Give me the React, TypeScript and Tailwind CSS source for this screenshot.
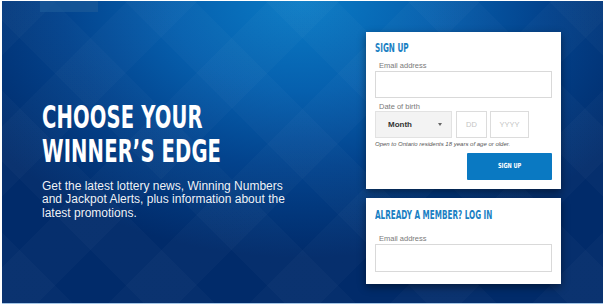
const COND = "font-['Liberation_Sans_Narrow','DejaVu_Sans_Condensed','Liberation_Sans',sans-serif]"

function Label({ text }: { text: string }) {
  return <div className="pl-[4px] text-[7.5px] leading-[9px] text-[#7a7a7a]">{text}</div>
}

function TextBox({ h = 'h-[27px]' }: { h?: string }) {
  return <div className={`${h} w-full border border-[#d9d9d9] bg-white`} />
}

export default function App() {
  return (
    <div className="h-[307px] w-[606px] bg-white pl-[2px] pr-[3px] pt-[1px] font-['Liberation_Sans',Arial,sans-serif]">
      <div className="flex h-[302px] w-full bg-[repeating-linear-gradient(45deg,rgba(255,255,255,0.02)_0_50px,rgba(0,0,0,0)_50px_100px),repeating-linear-gradient(-45deg,rgba(255,255,255,0.02)_0_50px,rgba(0,0,0,0)_50px_100px),radial-gradient(ellipse_62%_85%_at_50%_0%,#0a7bc5_0%,#0660ae_35%,#03438d_65%,#012b6a_100%)]">
        {/* left: headline */}
        <div className="flex flex-1 flex-col pl-[40px]">
          <div className="-ml-[2px] h-[11px] w-[58px] bg-[#1b5a98]/70" />
          <h1
            className={`mt-[88px] origin-left scale-x-[0.69] text-[31.5px] font-bold leading-[34px] tracking-[0.2px] text-white ${COND}`}
          >
            CHOOSE YOUR
            <br />
            WINNER’S EDGE
          </h1>
          <p className="mt-[12px] text-[12px] leading-[13.3px] text-white/95">
            Get the latest lottery news, Winning Numbers
            <br />
            and Jackpot Alerts, plus information about the
            <br />
            latest promotions.
          </p>
        </div>

        {/* right: forms */}
        <div className="mr-[42px] mt-[31px] flex w-[195px] flex-col gap-[9px]">
          <div className="bg-white px-[9px] pb-[9px] pt-[9px] shadow-[0_3px_8px_rgba(0,0,0,0.45)]">
            <div className={`origin-left scale-x-[0.65] text-[12.4px] font-bold leading-[14px] text-[#1a7fc3] ${COND}`}>
              SIGN UP
            </div>
            <div className="mt-[6px]">
              <Label text="Email address" />
            </div>
            <div className="mt-[1px]">
              <TextBox />
            </div>
            <div className="mt-[4px]">
              <Label text="Date of birth" />
            </div>
            <div className="flex h-[27px]">
              <div className="flex w-[77px] items-center justify-between border border-[#e2e2e2] bg-[#f3f3f3] pl-[12px] pr-[9px]">
                <span className="text-[8px] font-bold text-[#333]">Month</span>
                <span className="h-0 w-0 border-x-[2.5px] border-t-[3px] border-x-transparent border-t-[#666]" />
              </div>
              <div className="ml-[4px] flex w-[31px] items-center justify-center border border-[#dcdcdc] text-[7.5px] text-[#c4c4c4]">
                DD
              </div>
              <div className="ml-[3px] flex w-[39px] items-center justify-center border border-[#dcdcdc] text-[7.5px] text-[#c4c4c4]">
                YYYY
              </div>
            </div>
            <div className="mt-[3px] text-[6px] italic leading-[7px] text-[#555]">
              Open to Ontario residents 18 years of age or older.
            </div>
            <div className="mt-[5px] flex justify-end">
              <button className="flex h-[27px] w-[85px] items-center justify-center rounded-[1px] bg-[#0a79c2]">
                <span className={`scale-x-[0.8] text-[7px] font-bold text-white ${COND}`}>SIGN UP</span>
              </button>
            </div>
          </div>

          <div className="bg-white px-[9px] pb-[12px] pt-[10px] shadow-[0_3px_8px_rgba(0,0,0,0.45)]">
            <div className={`origin-left scale-x-[0.67] whitespace-nowrap text-[12px] font-bold leading-[14px] text-[#1a7fc3] ${COND}`}>
              ALREADY A MEMBER? LOG IN
            </div>
            <div className="mt-[12px]">
              <Label text="Email address" />
            </div>
            <div className="mt-[1px]">
              <TextBox h="h-[28px]" />
            </div>
          </div>
        </div>
      </div>
      <div className="h-[1px] w-full bg-[#a3c6e7]" />
    </div>
  )
}
